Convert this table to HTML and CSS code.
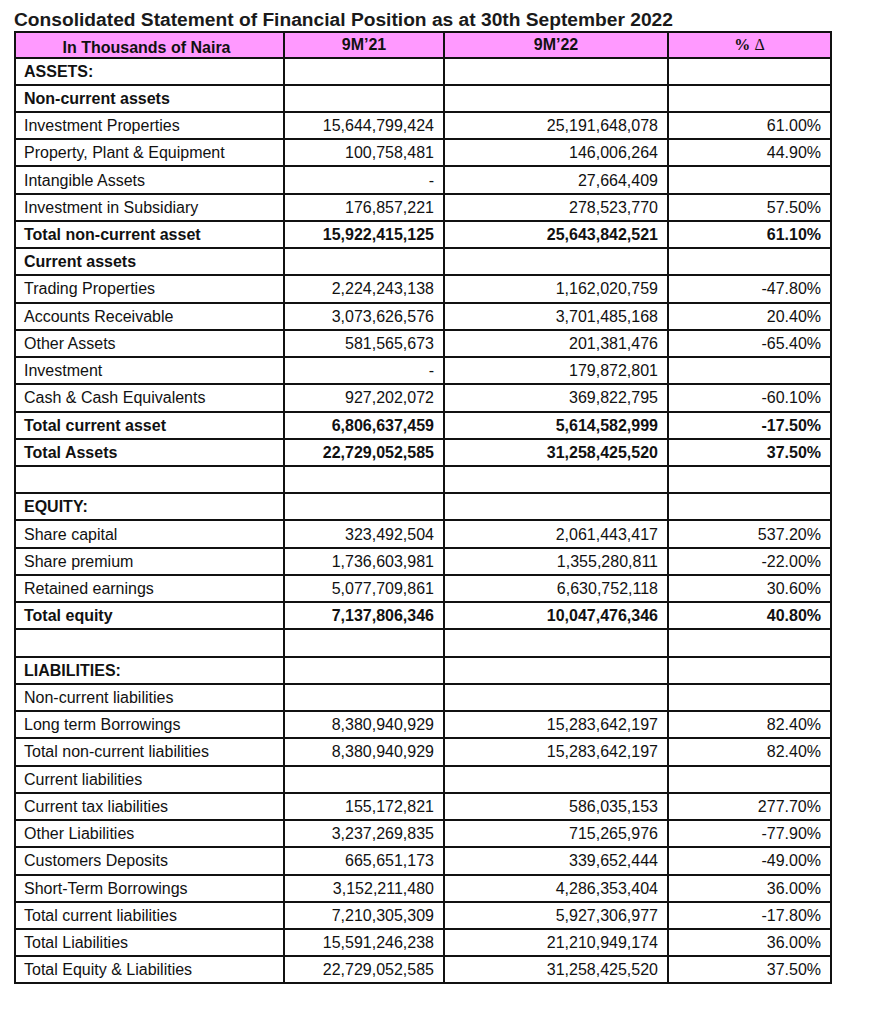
FILE: index.html
```html
<!DOCTYPE html>
<html lang="en">
<head>
<meta charset="utf-8">
<title>Consolidated Statement of Financial Position</title>
<link rel="stylesheet" href="styles.css">
</head>
<body>
<div class="page">
<h1 class="title">Consolidated Statement of Financial Position as at 30th September 2022</h1>
<table class="fs">
<colgroup><col class="c1"><col class="c2"><col class="c3"><col class="c4"></colgroup>
<thead>
<tr><th class="lead">In Thousands of Naira</th><th>9M’21</th><th>9M’22</th><th><span class="pct">%</span> <span class="delta">Δ</span></th></tr>
</thead>
<tbody>
<tr class="b"><td>ASSETS:</td><td></td><td></td><td></td></tr>
<tr class="b"><td>Non-current assets</td><td></td><td></td><td></td></tr>
<tr><td>Investment Properties</td><td>15,644,799,424</td><td>25,191,648,078</td><td>61.00%</td></tr>
<tr><td>Property, Plant &amp; Equipment</td><td>100,758,481</td><td>146,006,264</td><td>44.90%</td></tr>
<tr><td>Intangible Assets</td><td>-</td><td>27,664,409</td><td></td></tr>
<tr><td>Investment in Subsidiary</td><td>176,857,221</td><td>278,523,770</td><td>57.50%</td></tr>
<tr class="b"><td>Total non-current asset</td><td>15,922,415,125</td><td>25,643,842,521</td><td>61.10%</td></tr>
<tr class="b"><td>Current assets</td><td></td><td></td><td></td></tr>
<tr><td>Trading Properties</td><td>2,224,243,138</td><td>1,162,020,759</td><td>-47.80%</td></tr>
<tr><td>Accounts Receivable</td><td>3,073,626,576</td><td>3,701,485,168</td><td>20.40%</td></tr>
<tr><td>Other Assets</td><td>581,565,673</td><td>201,381,476</td><td>-65.40%</td></tr>
<tr><td>Investment</td><td>-</td><td>179,872,801</td><td></td></tr>
<tr><td>Cash &amp; Cash Equivalents</td><td>927,202,072</td><td>369,822,795</td><td>-60.10%</td></tr>
<tr class="b"><td>Total current asset</td><td>6,806,637,459</td><td>5,614,582,999</td><td>-17.50%</td></tr>
<tr class="b"><td>Total Assets</td><td>22,729,052,585</td><td>31,258,425,520</td><td>37.50%</td></tr>
<tr><td></td><td></td><td></td><td></td></tr>
<tr class="b"><td>EQUITY:</td><td></td><td></td><td></td></tr>
<tr><td>Share capital</td><td>323,492,504</td><td>2,061,443,417</td><td>537.20%</td></tr>
<tr><td>Share premium</td><td>1,736,603,981</td><td>1,355,280,811</td><td>-22.00%</td></tr>
<tr><td>Retained earnings</td><td>5,077,709,861</td><td>6,630,752,118</td><td>30.60%</td></tr>
<tr class="b"><td>Total equity</td><td>7,137,806,346</td><td>10,047,476,346</td><td>40.80%</td></tr>
<tr><td></td><td></td><td></td><td></td></tr>
<tr class="b"><td>LIABILITIES:</td><td></td><td></td><td></td></tr>
<tr><td>Non-current liabilities</td><td></td><td></td><td></td></tr>
<tr><td>Long term Borrowings</td><td>8,380,940,929</td><td>15,283,642,197</td><td>82.40%</td></tr>
<tr><td>Total non-current liabilities</td><td>8,380,940,929</td><td>15,283,642,197</td><td>82.40%</td></tr>
<tr><td>Current liabilities</td><td></td><td></td><td></td></tr>
<tr><td>Current tax liabilities</td><td>155,172,821</td><td>586,035,153</td><td>277.70%</td></tr>
<tr><td>Other Liabilities</td><td>3,237,269,835</td><td>715,265,976</td><td>-77.90%</td></tr>
<tr><td>Customers Deposits</td><td>665,651,173</td><td>339,652,444</td><td>-49.00%</td></tr>
<tr><td>Short-Term Borrowings</td><td>3,152,211,480</td><td>4,286,353,404</td><td>36.00%</td></tr>
<tr><td>Total current liabilities</td><td>7,210,305,309</td><td>5,927,306,977</td><td>-17.80%</td></tr>
<tr><td>Total Liabilities</td><td>15,591,246,238</td><td>21,210,949,174</td><td>36.00%</td></tr>
<tr><td>Total Equity &amp; Liabilities</td><td>22,729,052,585</td><td>31,258,425,520</td><td>37.50%</td></tr>
</tbody>
</table>
</div>
</body>
</html>
```

FILE: styles.css
```css
html, body {
  margin: 0;
  padding: 0;
  background: #ffffff;
}

.page {
  padding: 9px 14px 0 14px;
  font-family: "Liberation Sans", Arial, sans-serif;
  color: #111;
}

.title {
  margin: 0;
  font-size: 19.2px;
  line-height: 22px;
  font-weight: bold;
  color: #1a1a1a;
  white-space: nowrap;
}

.fs {
  border-collapse: separate;
  border-spacing: 0;
  table-layout: fixed;
  width: 818px;
  border-left: 2px solid #111;
  border-top: 2px solid #111;
  font-size: 16px;
}

.c1 { width: 269px; }
.c2 { width: 160px; }
.c3 { width: 224px; }
.c4 { width: 163px; }

.fs th,
.fs td {
  border-right: 2px solid #111;
  border-bottom: 2px solid #111;
  padding: 0 9px 0 8px;
  height: 25.24px;
  box-sizing: content-box;
  vertical-align: middle;
  white-space: nowrap;
  line-height: normal;
}

.fs thead th {
  background: #ff99ff;
  height: 23.5px;
  font-weight: bold;
  text-align: center;
  padding: 0;
}

.fs thead th.lead {
  vertical-align: bottom;
  padding-right: 6px;
}

.pct {
  font-family: "Liberation Serif", "Times New Roman", serif;
  font-weight: bold;
}

.delta {
  font-family: "Liberation Serif", "Times New Roman", serif;
  font-weight: normal;
}

.fs td {
  padding-top: 1px;
  height: 24.24px;
}

.fs td:first-child {
  text-align: left;
  padding-left: 8px;
}

.fs td:not(:first-child) {
  text-align: right;
  padding-right: 9px;
}

.fs tr.b td {
  font-weight: bold;
}
```
